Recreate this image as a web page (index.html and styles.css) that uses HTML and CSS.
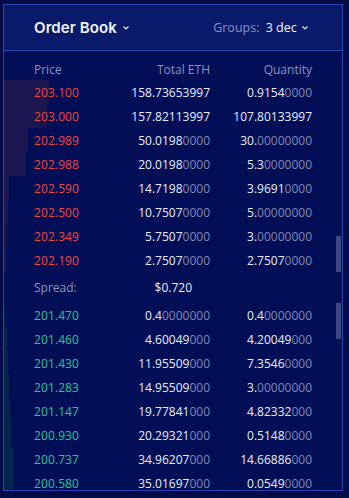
FILE: index.html
```html
<!DOCTYPE html>
<html lang="en">
<head>
    <meta charset="UTF-8">
    <meta name="viewport" content="width=device-width, initial-scale=1.0">
    <title>Order Book</title>
    <link rel="stylesheet" href="styles.css">
</head>
<body>

    <div class="panel">
        <div class="header">
            <div class="title">Order Book <svg class="chev" width="6" height="4" viewBox="0 0 6 4"><path d="M0.5 0.5 L3 3 L5.5 0.5" fill="none" stroke="#f2f4fc" stroke-width="1.1"/></svg></div>
            <div class="groups"><span class="muted">Groups:</span> 3 dec <svg class="chev" width="6" height="4" viewBox="0 0 6 4"><path d="M0.5 0.5 L3 3 L5.5 0.5" fill="none" stroke="#f2f4fc" stroke-width="1.1"/></svg></div>
        </div>

        <div class="row col-head">
            <span>Price</span>
            <span class="num">Total ETH</span>
            <span class="num">Quantity</span>
        </div>

        <!-- asks -->
        <div class="section asks">
            <div class="row"><i class="depth ask" style="width:45px"></i><span class="price">203.100</span><span class="num">158.73653997</span><span class="num">0.9154<em>0000</em></span></div>
            <div class="row"><i class="depth ask" style="width:43px"></i><span class="price">203.000</span><span class="num">157.82113997</span><span class="num">107.80133997</span></div>
            <div class="row"><i class="depth ask" style="width:24px"></i><span class="price">202.989</span><span class="num">50.0198<em>0000</em></span><span class="num">30.<em>00000000</em></span></div>
            <div class="row"><i class="depth ask" style="width:22px"></i><span class="price">202.988</span><span class="num">20.0198<em>0000</em></span><span class="num">5.3<em>0000000</em></span></div>
            <div class="row"><i class="depth ask" style="width:5px"></i><span class="price">202.590</span><span class="num">14.7198<em>0000</em></span><span class="num">3.9691<em>0000</em></span></div>
            <div class="row"><i class="depth ask" style="width:4px"></i><span class="price">202.500</span><span class="num">10.7507<em>0000</em></span><span class="num">5.<em>00000000</em></span></div>
            <div class="row"><i class="depth ask" style="width:3px"></i><span class="price">202.349</span><span class="num">5.7507<em>0000</em></span><span class="num">3.<em>00000000</em></span></div>
            <div class="row"><i class="depth ask" style="width:2px"></i><span class="price">202.190</span><span class="num">2.7507<em>0000</em></span><span class="num">2.7507<em>0000</em></span></div>
            <div class="thumb thumb-asks"></div>
        </div>

        <div class="row spread">
            <span class="label">Spread:</span>
            <span class="num spread-val">$0.720</span>
            <span></span>
        </div>

        <!-- bids -->
        <div class="section bids">
            <div class="row"><i class="depth bid" style="width:1px"></i><span class="price">201.470</span><span class="num">0.4<em>0000000</em></span><span class="num">0.4<em>0000000</em></span></div>
            <div class="row"><i class="depth bid" style="width:3px"></i><span class="price">201.460</span><span class="num">4.60049<em>000</em></span><span class="num">4.20049<em>000</em></span></div>
            <div class="row"><i class="depth bid" style="width:4px"></i><span class="price">201.430</span><span class="num">11.95509<em>000</em></span><span class="num">7.3546<em>0000</em></span></div>
            <div class="row"><i class="depth bid" style="width:5px"></i><span class="price">201.283</span><span class="num">14.95509<em>000</em></span><span class="num">3.<em>00000000</em></span></div>
            <div class="row"><i class="depth bid" style="width:6px"></i><span class="price">201.147</span><span class="num">19.77841<em>000</em></span><span class="num">4.82332<em>000</em></span></div>
            <div class="row"><i class="depth bid" style="width:7px"></i><span class="price">200.930</span><span class="num">20.29321<em>000</em></span><span class="num">0.5148<em>0000</em></span></div>
            <div class="row"><i class="depth bid" style="width:10px"></i><span class="price">200.737</span><span class="num">34.96207<em>000</em></span><span class="num">14.66886<em>000</em></span></div>
            <div class="row"><i class="depth bid" style="width:10px"></i><span class="price">200.580</span><span class="num">35.01697<em>000</em></span><span class="num">0.0549<em>0000</em></span></div>
            <div class="thumb thumb-bids"></div>
        </div>
    </div>

</body>
</html>
```

FILE: styles.css
```css
body {
    background-color: #030c47;
    font-family: "Open Sans", "Noto Sans", sans-serif;
    margin: 0;
    color: #e9edf9;
}

.panel {
    position: relative;
    margin: 4px 0 0 3px;
    width: 338px;
    height: 485px;
    border: 1px solid #2b45b3;
    background: #020f57;
    overflow: hidden;
}

.header {
    height: 45px;
    padding: 0 34px 0 30px;
    display: flex;
    align-items: center;
    justify-content: space-between;
    background: #0a1a6a;
    border-bottom: 1px solid #2b45b3;
}

.title {
    font-family: Inter, "Noto Sans", sans-serif;
    font-weight: 600;
    font-size: 15px;
    color: #f2f4fc;
    letter-spacing: 0.1px;
}

.chev {
    vertical-align: middle;
    margin-left: 2px;
    position: relative;
    top: -1px;
}

.groups {
    font-size: 12.5px;
    color: #f2f4fc;
}

.muted {
    color: #8a93c0;
    margin-right: 3px;
}

.row {
    position: relative;
    display: grid;
    grid-template-columns: 70px 106px 102px;
    align-items: center;
    height: 24px;
    padding: 0 30px;
    font-size: 12px;
}

.row > span {
    position: relative;
    white-space: nowrap;
}

.num {
    text-align: right;
}

.col-head {
    height: 19px;
    padding-top: 10px;
    align-items: start;
    color: #8a93c0;
}

.section {
    position: relative;
}

.price {
    letter-spacing: 0.1px;
}

.asks .price {
    color: #f2443a;
}

.bids .price {
    color: #1ec995;
}

em {
    font-style: normal;
    color: #8089b2;
}

.depth {
    position: absolute;
    left: 0;
    top: 0;
    height: 100%;
}

.depth.ask {
    background: #1b1650;
}

.depth.bid {
    background: #04264e;
}

.spread {
    height: 31px;
}

.label {
    color: #8a93c0;
}

.spread-val {
    padding-right: 18px;
}

.thumb {
    position: absolute;
    right: 1px;
    width: 5px;
    height: 36px;
    background: #3a4888;
}

.thumb-asks {
    bottom: 0;
}

.thumb-bids {
    top: 0;
}
```
